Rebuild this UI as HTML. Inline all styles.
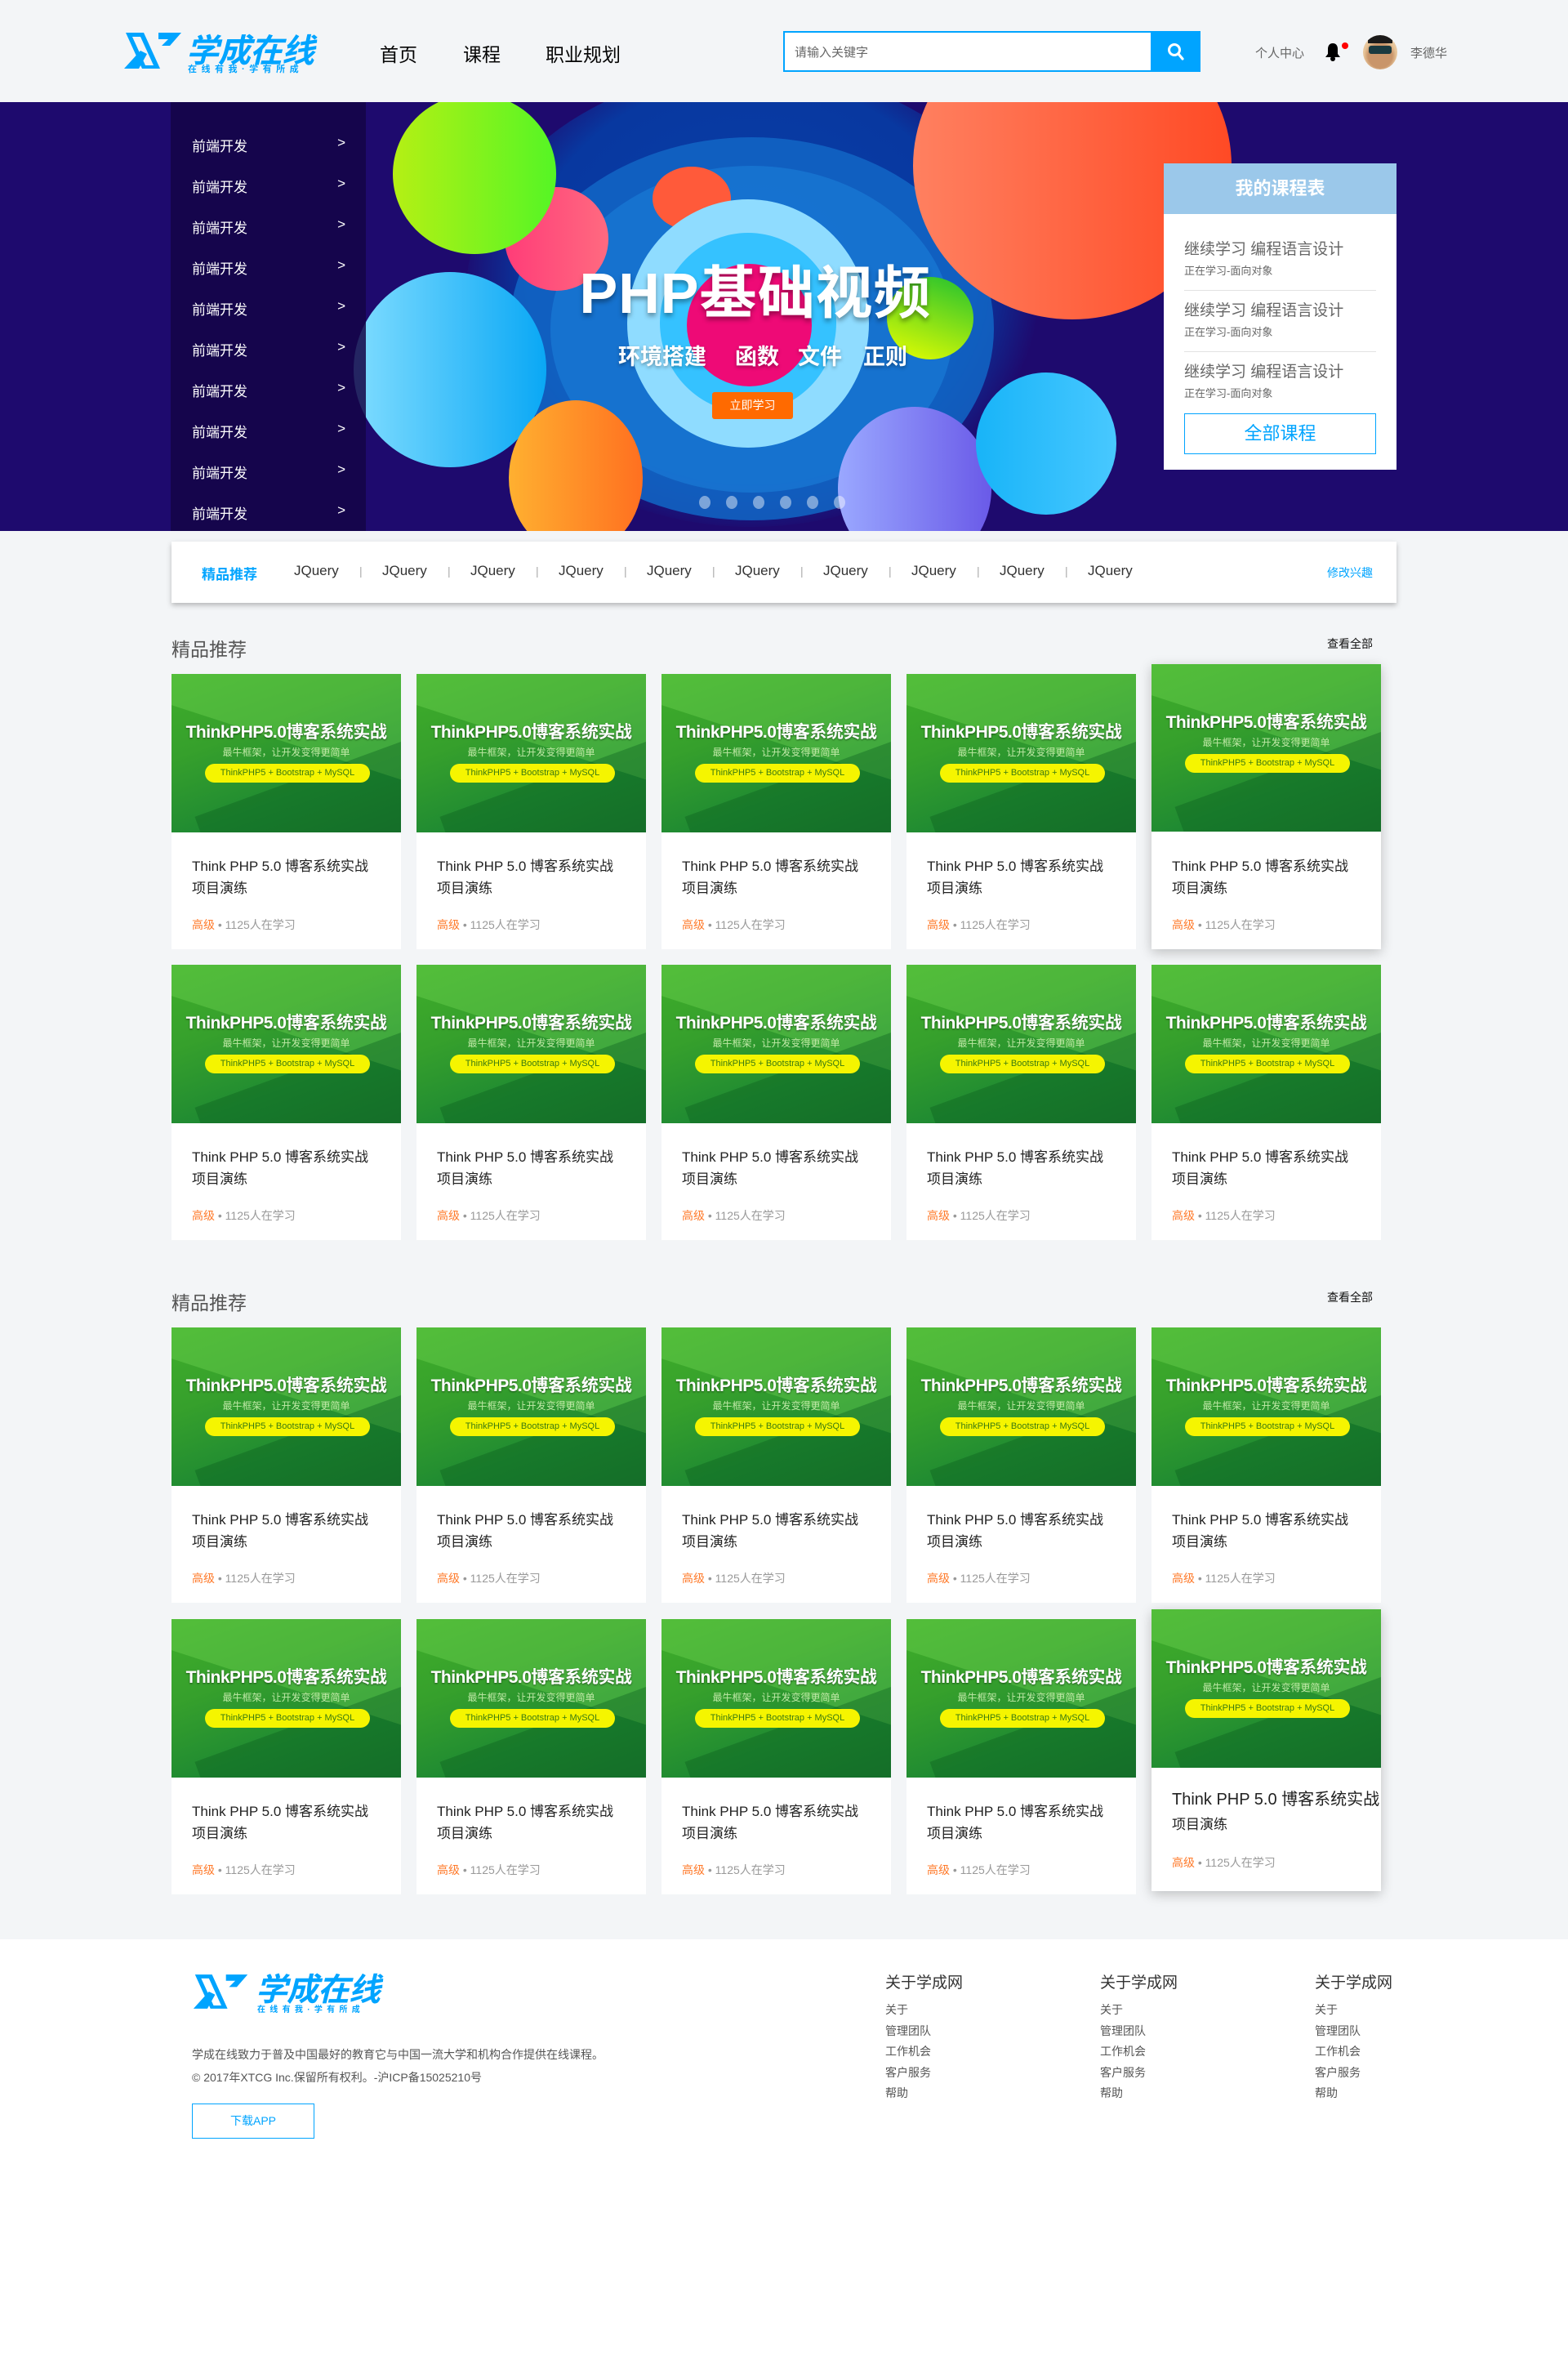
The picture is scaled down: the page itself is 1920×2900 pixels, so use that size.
<!DOCTYPE html>
<html><head><meta charset="utf-8">
<style>
*{margin:0;padding:0;box-sizing:border-box}
body{width:1920px;height:2900px;background:#f3f5f7;font-family:"Liberation Sans","Noto Sans CJK SC",sans-serif;position:relative;overflow:hidden;color:#333}
.a{position:absolute}
.nav a{position:absolute;top:48px;font-size:23px;color:#050505}
.banner{left:0;top:125px;width:1920px;height:525px;background:#1e0a6e;overflow:hidden}
.c{position:absolute;border-radius:50%}
.menu{left:209px;top:125px;width:239px;height:525px;background:rgba(20,5,70,0.85)}
.menu div{position:absolute;left:26px;width:188px;font-size:17px;color:#fff}
.menu div span{position:absolute;right:0;top:0}
.tabs{left:210px;top:663px;width:1500px;height:75px;background:#fff;box-shadow:0 3px 6px rgba(0,0,0,.25)}
.tabs span{position:absolute;top:26px;font-size:17px;color:#333}
.tabs i{position:absolute;top:28px;font-style:normal;color:#aaa;font-size:14px}
.card{position:absolute;width:281px;height:337px;background:#fff}
.card.h{box-shadow:0 4px 14px rgba(0,0,0,.22)}
.img{position:absolute;left:0;top:0;width:281px;height:194px;overflow:hidden;background:linear-gradient(160deg,#3fae2a 0%,#36a02c 35%,#1f8a32 70%,#1c7a30 100%)}
.img:before{content:"";position:absolute;left:-40px;top:-60px;width:360px;height:140px;background:rgba(120,220,90,.35);transform:rotate(18deg)}
.img:after{content:"";position:absolute;left:40px;top:120px;width:300px;height:120px;background:rgba(10,90,30,.35);transform:rotate(-20deg)}
.img b{position:absolute;left:0;width:281px;text-align:center;top:55px;color:#fff;font-size:21px;font-weight:bold;white-space:nowrap;z-index:2;text-shadow:0 1px 2px rgba(0,0,0,.5);letter-spacing:-0.5px}
.img em{position:absolute;left:0;width:281px;text-align:center;top:87px;color:#bfe8a6;font-size:12px;font-style:normal;z-index:2}
.img u{position:absolute;left:41px;width:202px;top:110px;height:23px;line-height:23px;text-align:center;background:#f5f500;border-radius:12px;color:#3a7a10;font-size:11px;text-decoration:none;z-index:2}
.card p{position:absolute;left:25px;top:222px;width:250px;font-size:17px;line-height:27px;color:#222}
.card small{position:absolute;left:25px;top:297px;font-size:14px;color:#999}
.card small s{text-decoration:none;color:#ff7a2a}
.sec{font-size:23px;color:#555}
.more{font-size:14px;color:#111}
.fcol{position:absolute;font-size:14px;color:#555;line-height:25.5px}
.fcol h4{font-size:19px;font-weight:normal;color:#333;margin-bottom:6px;line-height:28px}
.sub{position:absolute;top:290px;font-size:27px;font-weight:bold;color:#fff;text-shadow:0 2px 4px rgba(0,0,0,.35)}
</style></head><body>

<svg class="a" style="left:150px;top:36px" width="76" height="52" viewBox="0 0 76 52">
<polygon points="4,4 26,4 46,48 24,48" fill="#00a4ff"/>
<polygon points="12,9 22,9 38,44 28,44" fill="#f3f5f7"/>
<polygon points="44,4 72,4 58,20 48,20 56,12 44,12" fill="#00a4ff"/>
<polygon points="2,48 20,48 30,30 22,26" fill="#00a4ff"/>
</svg>
<div class="a" style="left:228px;top:30px;font-size:40px;font-weight:bold;font-style:italic;color:#00a4ff;letter-spacing:-1px">学成在线</div>
<div class="a" style="left:230px;top:76px;font-size:11px;font-weight:bold;color:#00a4ff;letter-spacing:5.5px">在线有我·学有所成</div>
<div class="nav"><a style="left:465px">首页</a><a style="left:567px">课程</a><a style="left:668px">职业规划</a></div>
<div class="a" style="left:959px;top:38px;width:452px;height:50px;border:2px solid #00a4ff;background:#fff"></div>
<div class="a" style="left:973px;top:53px;font-size:15px;color:#666">请输入关键字</div>
<div class="a" style="left:1410px;top:38px;width:60px;height:50px;background:#00a4ff"></div>
<svg class="a" style="left:1428px;top:51px" width="24" height="24" viewBox="0 0 24 24"><circle cx="10" cy="10" r="6.5" fill="none" stroke="#fff" stroke-width="3"/><line x1="15" y1="15" x2="20" y2="21" stroke="#fff" stroke-width="3.2" stroke-linecap="round"/></svg>
<div class="a" style="left:1537px;top:54px;font-size:15px;color:#666">个人中心</div>
<svg class="a" style="left:1621px;top:50px" width="22" height="26" viewBox="0 0 22 26"><path d="M11 3c-4 0-6 3-6 7v6l-3 4h18l-3-4v-6c0-4-2-7-6-7z" fill="#000"/><circle cx="11" cy="22" r="3" fill="#000"/></svg>
<div class="a" style="left:1643px;top:52px;width:8px;height:8px;border-radius:50%;background:#f00"></div>
<div class="a" style="left:1669px;top:43px;width:42px;height:42px;border-radius:50%;background:radial-gradient(circle at 50% 60%,#c9956a 0 45%,#e6c397 60%,#f0dcc0 100%);overflow:hidden"><div style="position:absolute;left:7px;top:13px;width:28px;height:10px;background:#1a3a40;border-radius:3px"></div><div style="position:absolute;left:6px;top:0;width:30px;height:10px;background:#1b1a1a;border-radius:50% 50% 0 0"></div></div>
<div class="a" style="left:1727px;top:54px;font-size:15px;color:#666">李德华</div>

<div class="a banner">
 <div class="c" style="left:570px;top:-40px;width:700px;height:560px;background:radial-gradient(ellipse at 50% 45%,#0a3fa8 0,#0838a0 55%,rgba(30,10,110,0) 72%)"></div>
 <div class="c" style="left:624px;top:43px;width:593px;height:469px;background:#1266c6;opacity:.85"></div>
 <div class="c" style="left:674px;top:78px;width:493px;height:400px;background:#1a7ad6;opacity:.7"></div>
 <div class="c" style="left:799px;top:79px;width:96px;height:78px;background:#ff5a3a"></div>
 <div class="c" style="left:618px;top:104px;width:127px;height:127px;background:linear-gradient(90deg,#ff3c78,#ff6a80)"></div>
 <div class="c" style="left:481px;top:-10px;width:200px;height:196px;background:linear-gradient(90deg,#b5f014,#55f525)"></div>
 <div class="c" style="left:768px;top:119px;width:296px;height:304px;background:#8fdcff"></div>
 <div class="c" style="left:808px;top:160px;width:216px;height:220px;background:#35c2ff"></div>
 <div class="c" style="left:841px;top:198px;width:153px;height:150px;background:#ee0a76"></div>
 <div class="c" style="left:1086px;top:214px;width:106px;height:101px;background:linear-gradient(200deg,#20c030,#e8ff00)"></div>
 <div class="c" style="left:1118px;top:-110px;width:390px;height:376px;background:linear-gradient(90deg,#ff8060,#ff4a25)"></div>
 <div class="c" style="left:433px;top:208px;width:236px;height:239px;background:linear-gradient(90deg,#7fdcff,#0aa8f5)"></div>
 <div class="c" style="left:623px;top:365px;width:164px;height:190px;background:linear-gradient(90deg,#ffb030,#ff7020)"></div>
 <div class="c" style="left:1026px;top:373px;width:188px;height:200px;background:linear-gradient(90deg,#9aa8ff,#6a5ae8)"></div>
 <div class="c" style="left:1195px;top:331px;width:172px;height:174px;background:linear-gradient(90deg,#18b4f8,#48c8ff)"></div>
 <div class="a" style="left:680px;top:178px;width:490px;text-align:center;font-size:70px;font-weight:bold;color:#fff;letter-spacing:1px;text-shadow:0 4px 6px rgba(0,0,0,.35)">PHP基础视频</div>
 <div class="sub" style="left:757px">环境搭建</div>
 <div class="sub" style="left:900px">函数</div>
 <div class="sub" style="left:977px">文件</div>
 <div class="sub" style="left:1057px">正则</div>
 <div class="a" style="left:872px;top:355px;width:99px;height:33px;background:#ff6a00;border-radius:3px;color:#fff;font-size:14px;text-align:center;line-height:33px">立即学习</div>
 <div class="a" style="left:856px;top:482px;width:180px;height:16px">
  <span class="c" style="left:0;width:14px;height:16px;background:rgba(255,255,255,.45)"></span><span class="c" style="left:33px;width:14px;height:16px;background:rgba(255,255,255,.45)"></span><span class="c" style="left:66px;width:14px;height:16px;background:rgba(255,255,255,.45)"></span><span class="c" style="left:99px;width:14px;height:16px;background:rgba(255,255,255,.45)"></span><span class="c" style="left:132px;width:14px;height:16px;background:rgba(255,255,255,.45)"></span><span class="c" style="left:165px;width:14px;height:16px;background:rgba(255,255,255,.45)"></span>
 </div>
</div>
<div class="a menu">
 <div style="top:40px">前端开发<span>&gt;</span></div><div style="top:90px">前端开发<span>&gt;</span></div><div style="top:140px">前端开发<span>&gt;</span></div><div style="top:190px">前端开发<span>&gt;</span></div><div style="top:240px">前端开发<span>&gt;</span></div><div style="top:290px">前端开发<span>&gt;</span></div><div style="top:340px">前端开发<span>&gt;</span></div><div style="top:390px">前端开发<span>&gt;</span></div><div style="top:440px">前端开发<span>&gt;</span></div><div style="top:490px">前端开发<span>&gt;</span></div>
</div>
<div class="a" style="left:1425px;top:200px;width:285px;height:375px;background:#fff">
 <div style="height:62px;background:#9bc8ea;color:#fff;font-size:22px;font-weight:bold;text-align:center;line-height:62px">我的课程表</div>
 <div class="a" style="left:25px;top:90px;font-size:19px;color:#666">继续学习 编程语言设计</div>
 <div class="a" style="left:25px;top:121px;font-size:13px;color:#666">正在学习-面向对象</div>
 <div class="a" style="left:25px;top:155px;width:235px;height:1px;background:#e2e2e2"></div>
 <div class="a" style="left:25px;top:165px;font-size:19px;color:#666">继续学习 编程语言设计</div>
 <div class="a" style="left:25px;top:196px;font-size:13px;color:#666">正在学习-面向对象</div>
 <div class="a" style="left:25px;top:230px;width:235px;height:1px;background:#e2e2e2"></div>
 <div class="a" style="left:25px;top:240px;font-size:19px;color:#666">继续学习 编程语言设计</div>
 <div class="a" style="left:25px;top:271px;font-size:13px;color:#666">正在学习-面向对象</div>
 <div class="a" style="left:25px;top:306px;width:235px;height:50px;border:1px solid #00a4ff;color:#00a4ff;font-size:22px;text-align:center;line-height:48px">全部课程</div>
</div>

<div class="a tabs">
 <span style="left:37px;color:#00a4ff;font-weight:bold">精品推荐</span>
 <span style="left:150px">JQuery</span><i style="left:230px">|</i>
 <span style="left:258px">JQuery</span><i style="left:338px">|</i>
 <span style="left:366px">JQuery</span><i style="left:446px">|</i>
 <span style="left:474px">JQuery</span><i style="left:554px">|</i>
 <span style="left:582px">JQuery</span><i style="left:662px">|</i>
 <span style="left:690px">JQuery</span><i style="left:770px">|</i>
 <span style="left:798px">JQuery</span><i style="left:878px">|</i>
 <span style="left:906px">JQuery</span><i style="left:986px">|</i>
 <span style="left:1014px">JQuery</span><i style="left:1094px">|</i>
 <span style="left:1122px">JQuery</span>
 <span style="left:1415px;font-size:14px;color:#00a4ff;top:28px">修改兴趣</span>
</div>

<div class="a sec" style="left:210px;top:776px">精品推荐</div>
<div class="a more" style="left:1625px;top:778px">查看全部</div>
<div class="a sec" style="left:210px;top:1576px">精品推荐</div>
<div class="a more" style="left:1625px;top:1578px">查看全部</div>

<div class="card" style="left:210px;top:825px"><div class="img"><b>ThinkPHP5.0博客系统实战</b><em>最牛框架，让开发变得更简单</em><u>ThinkPHP5 + Bootstrap + MySQL</u></div><p>Think PHP 5.0 博客系统实战<br>项目演练</p><small><s>高级</s> • 1125人在学习</small></div>
<div class="card" style="left:510px;top:825px"><div class="img"><b>ThinkPHP5.0博客系统实战</b><em>最牛框架，让开发变得更简单</em><u>ThinkPHP5 + Bootstrap + MySQL</u></div><p>Think PHP 5.0 博客系统实战<br>项目演练</p><small><s>高级</s> • 1125人在学习</small></div>
<div class="card" style="left:810px;top:825px"><div class="img"><b>ThinkPHP5.0博客系统实战</b><em>最牛框架，让开发变得更简单</em><u>ThinkPHP5 + Bootstrap + MySQL</u></div><p>Think PHP 5.0 博客系统实战<br>项目演练</p><small><s>高级</s> • 1125人在学习</small></div>
<div class="card" style="left:1110px;top:825px"><div class="img"><b>ThinkPHP5.0博客系统实战</b><em>最牛框架，让开发变得更简单</em><u>ThinkPHP5 + Bootstrap + MySQL</u></div><p>Think PHP 5.0 博客系统实战<br>项目演练</p><small><s>高级</s> • 1125人在学习</small></div>
<div class="card h" style="left:1410px;top:813px;height:349px"><div class="img" style="height:205px"><b>ThinkPHP5.0博客系统实战</b><em>最牛框架，让开发变得更简单</em><u>ThinkPHP5 + Bootstrap + MySQL</u></div><p style="top:234px">Think PHP 5.0 博客系统实战<br>项目演练</p><small style="top:309px"><s>高级</s> • 1125人在学习</small></div>

<div class="card" style="left:210px;top:1181px"><div class="img"><b>ThinkPHP5.0博客系统实战</b><em>最牛框架，让开发变得更简单</em><u>ThinkPHP5 + Bootstrap + MySQL</u></div><p>Think PHP 5.0 博客系统实战<br>项目演练</p><small><s>高级</s> • 1125人在学习</small></div>
<div class="card" style="left:510px;top:1181px"><div class="img"><b>ThinkPHP5.0博客系统实战</b><em>最牛框架，让开发变得更简单</em><u>ThinkPHP5 + Bootstrap + MySQL</u></div><p>Think PHP 5.0 博客系统实战<br>项目演练</p><small><s>高级</s> • 1125人在学习</small></div>
<div class="card" style="left:810px;top:1181px"><div class="img"><b>ThinkPHP5.0博客系统实战</b><em>最牛框架，让开发变得更简单</em><u>ThinkPHP5 + Bootstrap + MySQL</u></div><p>Think PHP 5.0 博客系统实战<br>项目演练</p><small><s>高级</s> • 1125人在学习</small></div>
<div class="card" style="left:1110px;top:1181px"><div class="img"><b>ThinkPHP5.0博客系统实战</b><em>最牛框架，让开发变得更简单</em><u>ThinkPHP5 + Bootstrap + MySQL</u></div><p>Think PHP 5.0 博客系统实战<br>项目演练</p><small><s>高级</s> • 1125人在学习</small></div>
<div class="card" style="left:1410px;top:1181px"><div class="img"><b>ThinkPHP5.0博客系统实战</b><em>最牛框架，让开发变得更简单</em><u>ThinkPHP5 + Bootstrap + MySQL</u></div><p>Think PHP 5.0 博客系统实战<br>项目演练</p><small><s>高级</s> • 1125人在学习</small></div>

<div class="card" style="left:210px;top:1625px"><div class="img"><b>ThinkPHP5.0博客系统实战</b><em>最牛框架，让开发变得更简单</em><u>ThinkPHP5 + Bootstrap + MySQL</u></div><p>Think PHP 5.0 博客系统实战<br>项目演练</p><small><s>高级</s> • 1125人在学习</small></div>
<div class="card" style="left:510px;top:1625px"><div class="img"><b>ThinkPHP5.0博客系统实战</b><em>最牛框架，让开发变得更简单</em><u>ThinkPHP5 + Bootstrap + MySQL</u></div><p>Think PHP 5.0 博客系统实战<br>项目演练</p><small><s>高级</s> • 1125人在学习</small></div>
<div class="card" style="left:810px;top:1625px"><div class="img"><b>ThinkPHP5.0博客系统实战</b><em>最牛框架，让开发变得更简单</em><u>ThinkPHP5 + Bootstrap + MySQL</u></div><p>Think PHP 5.0 博客系统实战<br>项目演练</p><small><s>高级</s> • 1125人在学习</small></div>
<div class="card" style="left:1110px;top:1625px"><div class="img"><b>ThinkPHP5.0博客系统实战</b><em>最牛框架，让开发变得更简单</em><u>ThinkPHP5 + Bootstrap + MySQL</u></div><p>Think PHP 5.0 博客系统实战<br>项目演练</p><small><s>高级</s> • 1125人在学习</small></div>
<div class="card" style="left:1410px;top:1625px"><div class="img"><b>ThinkPHP5.0博客系统实战</b><em>最牛框架，让开发变得更简单</em><u>ThinkPHP5 + Bootstrap + MySQL</u></div><p>Think PHP 5.0 博客系统实战<br>项目演练</p><small><s>高级</s> • 1125人在学习</small></div>

<div class="card" style="left:210px;top:1982px"><div class="img"><b>ThinkPHP5.0博客系统实战</b><em>最牛框架，让开发变得更简单</em><u>ThinkPHP5 + Bootstrap + MySQL</u></div><p>Think PHP 5.0 博客系统实战<br>项目演练</p><small><s>高级</s> • 1125人在学习</small></div>
<div class="card" style="left:510px;top:1982px"><div class="img"><b>ThinkPHP5.0博客系统实战</b><em>最牛框架，让开发变得更简单</em><u>ThinkPHP5 + Bootstrap + MySQL</u></div><p>Think PHP 5.0 博客系统实战<br>项目演练</p><small><s>高级</s> • 1125人在学习</small></div>
<div class="card" style="left:810px;top:1982px"><div class="img"><b>ThinkPHP5.0博客系统实战</b><em>最牛框架，让开发变得更简单</em><u>ThinkPHP5 + Bootstrap + MySQL</u></div><p>Think PHP 5.0 博客系统实战<br>项目演练</p><small><s>高级</s> • 1125人在学习</small></div>
<div class="card" style="left:1110px;top:1982px"><div class="img"><b>ThinkPHP5.0博客系统实战</b><em>最牛框架，让开发变得更简单</em><u>ThinkPHP5 + Bootstrap + MySQL</u></div><p>Think PHP 5.0 博客系统实战<br>项目演练</p><small><s>高级</s> • 1125人在学习</small></div>
<div class="card h" style="left:1410px;top:1970px;height:345px"><div class="img"><b>ThinkPHP5.0博客系统实战</b><em>最牛框架，让开发变得更简单</em><u>ThinkPHP5 + Bootstrap + MySQL</u></div><p style="top:218px;width:270px;font-size:20px;line-height:30px;white-space:nowrap">Think PHP 5.0 博客系统实战<br><span style="font-size:17px">项目演练</span></p><small style="top:300px"><s>高级</s> • 1125人在学习</small></div>

<div class="a" style="left:0;top:2374px;width:1920px;height:526px;background:#fff"></div>
<svg class="a" style="left:235px;top:2413px" width="72" height="50" viewBox="0 0 76 52">
<polygon points="4,4 26,4 46,48 24,48" fill="#00a4ff"/>
<polygon points="12,9 22,9 38,44 28,44" fill="#fff"/>
<polygon points="44,4 72,4 58,20 48,20 56,12 44,12" fill="#00a4ff"/>
<polygon points="2,48 20,48 30,30 22,26" fill="#00a4ff"/>
</svg>
<div class="a" style="left:313px;top:2405px;font-size:39px;font-weight:bold;font-style:italic;color:#00a4ff;letter-spacing:-1px">学成在线</div>
<div class="a" style="left:315px;top:2451px;font-size:10px;font-weight:bold;color:#00a4ff;letter-spacing:5.3px">在线有我·学有所成</div>
<div class="a" style="left:235px;top:2505px;font-size:14px;color:#555">学成在线致力于普及中国最好的教育它与中国一流大学和机构合作提供在线课程。</div>
<div class="a" style="left:235px;top:2533px;font-size:14px;color:#555">© 2017年XTCG Inc.保留所有权利。-沪ICP备15025210号</div>
<div class="a" style="left:235px;top:2575px;width:150px;height:43px;border:1px solid #00a4ff;color:#00a4ff;font-size:14px;text-align:center;line-height:41px">下载APP</div>
<div class="fcol" style="left:1084px;top:2414px"><h4>关于学成网</h4>关于<br>管理团队<br>工作机会<br>客户服务<br>帮助</div>
<div class="fcol" style="left:1347px;top:2414px"><h4>关于学成网</h4>关于<br>管理团队<br>工作机会<br>客户服务<br>帮助</div>
<div class="fcol" style="left:1610px;top:2414px"><h4>关于学成网</h4>关于<br>管理团队<br>工作机会<br>客户服务<br>帮助</div>
</body></html>
